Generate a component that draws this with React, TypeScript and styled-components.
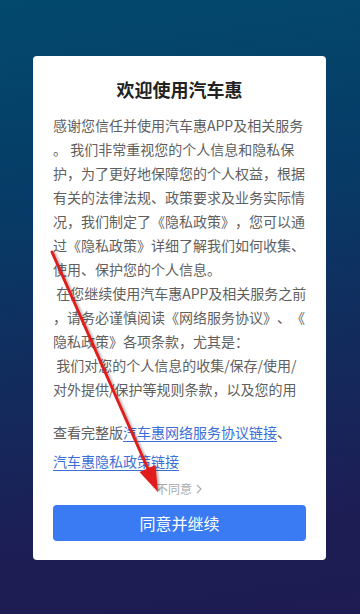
import styled, { createGlobalStyle } from 'styled-components';

const GlobalStyle = createGlobalStyle`
  html, body {
    margin: 0;
    padding: 0;
  }
  body {
    font-family: 'Noto Sans CJK SC', 'Noto Sans', sans-serif;
    text-spacing-trim: space-all;
  }
`;

const introLines = [
  '感谢您信任并使用汽车惠APP及相关服务',
  '。 我们非常重视您的个人信息和隐私保',
  '护，为了更好地保障您的个人权益，根据',
  '有关的法律法规、政策要求及业务实际情',
  '况，我们制定了《隐私政策》，您可以通',
  '过《隐私政策》详细了解我们如何收集、',
  '使用、保护您的个人信息。',
  ' 在您继续使用汽车惠APP及相关服务之前',
  '，请务必谨慎阅读《网络服务协议》、《',
  '隐私政策》各项条款，尤其是：',
  ' 我们对您的个人信息的收集/保存/使用/',
  '对外提供/保护等规则条款，以及您的用',
];

function App() {
  return (
    <>
      <GlobalStyle />
      <Page>
        <Card>
          <Title>欢迎使用汽车惠</Title>

          <ScrollArea>
            {introLines.map((line, i) => (
              <Line key={i}>{line}</Line>
            ))}
          </ScrollArea>

          <Links>
            <LinkRow>
              查看完整版<Link href="#">汽车惠网络服务协议链接</Link>、
            </LinkRow>
            <LinkRow>
              <Link href="#">汽车惠隐私政策链接</Link>
            </LinkRow>
          </Links>

          <Disagree>
            不同意
            <svg width="8" height="10" viewBox="0 0 8 10">
              <path d="M2 1 L6 5 L2 9" fill="none" stroke="#aaa" strokeWidth="1.1" />
            </svg>
          </Disagree>

          <AgreeButton>同意并继续</AgreeButton>
        </Card>

        <Arrow width="360" height="614" viewBox="0 0 360 614">
          <defs>
            <filter id="shade" x="-20%" y="-20%" width="140%" height="140%">
              <feDropShadow dx="2" dy="1" stdDeviation="1.2" floodColor="#000" floodOpacity="0.3" />
            </filter>
          </defs>
          <g filter="url(#shade)">
            <line x1="52" y1="252" x2="148" y2="469" stroke="#e01f1c" strokeWidth="3" strokeLinecap="round" />
            <polygon points="158,492 139.5,472 155.5,465" fill="#e01f1c" />
          </g>
        </Arrow>
      </Page>
    </>
  );
}

export default App;

const Page = styled.div`
  position: relative;
  width: 360px;
  height: 614px;
  box-sizing: border-box;
  padding: 56px 34px 0 33px;
  background: linear-gradient(172deg, #03496d 0%, #063c67 30%, #14295c 62%, #1d1d54 85%, #1e1c52 100%);
  overflow: hidden;
`;

const Card = styled.div`
  display: flex;
  flex-direction: column;
  box-sizing: border-box;
  height: 504px;
  padding: 20px 20px 19px;
  background: #ffffff;
  border-radius: 4px;
`;

const Title = styled.h1`
  margin: 0;
  font-size: 18px;
  line-height: 26px;
  font-weight: 700;
  color: #222222;
  text-align: center;
`;

const ScrollArea = styled.div`
  margin-top: 11px;
  height: 288px;
  overflow: hidden;
  flex-shrink: 0;
`;

const Line = styled.div`
  font-size: 14px;
  line-height: 24px;
  color: #5f5f5f;
  white-space: pre;
`;

const Links = styled.div`
  margin-top: 17px;
`;

const LinkRow = styled.div`
  font-size: 14px;
  line-height: 29px;
  color: #5f5f5f;
  white-space: nowrap;
`;

const Link = styled.a`
  color: #3b6fd6;
  text-decoration: underline;
  text-underline-offset: 3px;
`;

const Disagree = styled.div`
  margin-top: 5px;
  display: flex;
  align-items: center;
  justify-content: center;
  gap: 3px;
  font-size: 12px;
  line-height: 16px;
  color: #aaaaaa;
`;

const AgreeButton = styled.button`
  margin-top: 8px;
  height: 36px;
  border: none;
  border-radius: 4px;
  background: #3a7af3;
  color: #ffffff;
  font-family: 'Noto Sans CJK SC', sans-serif;
  font-size: 16px;
  cursor: pointer;
`;

const Arrow = styled.svg`
  position: absolute;
  top: 0;
  left: 0;
  pointer-events: none;
`;
